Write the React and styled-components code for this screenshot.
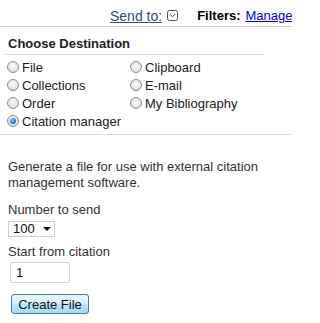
import React from "react";
import styled, { createGlobalStyle } from "styled-components";

const Global = createGlobalStyle`
  html, body { margin: 0; padding: 0; background: #fff; }
  body { font-family: "Liberation Sans", Arial, sans-serif; font-size: 13px; color: #333; }
`;

const Page = styled.div`
  width: 292px;
  height: 323px;
  overflow: hidden;
`;

const TopBar = styled.div`
  display: flex;
  align-items: center;
  height: 27px;
  padding: 5px 0 0 110px;
  border-bottom: 1px solid #ccc;
  white-space: nowrap;
  box-sizing: border-box;
`;

const SendLink = styled.a`
  color: #2f4a8b;
  text-decoration: underline;
  font-size: 14px;
`;

const IconBox = styled.span`
  display: inline-flex;
  width: 11px;
  height: 11px;
  margin-left: 5px;
  margin-right: 19px;
`;

const FilterLabel = styled.span`
  font-weight: bold;
  color: #000;
`;

const ManageLink = styled.a`
  color: #0000ee;
  text-decoration: underline;
  margin-left: 5px;
`;

const Section = styled.div`
  padding: 8px 0 0 5px;
`;

const Heading = styled.div`
  font-weight: bold;
  color: #222;
  font-size: 13px;
  line-height: 17px;
  padding: 0 0 2px 3px;
  margin-right: 27px;
  border-bottom: 1px solid #ddd;
`;

const RadioGrid = styled.div`
  display: grid;
  grid-template-columns: 123px 1fr;
  grid-auto-rows: 18px;
  margin: 3px 0 0 2px;
`;

const RadioItem = styled.label`
  display: flex;
  align-items: center;
  gap: 3px;
  font-size: 13px;
  color: #222;
`;

const RadioDot = styled.span`
  width: 12px;
  height: 12px;
  border-radius: 50%;
  box-sizing: border-box;
  border: 1px solid #8e8f8f;
  background: radial-gradient(circle at 50% 40%, #fdfdfd 0%, #e6e6e6 55%, #cfcfcf 100%);
  display: inline-flex;
  align-items: center;
  justify-content: center;
  &::after {
    content: "";
    display: ${(p) => (p.$checked ? "block" : "none")};
    width: 6px;
    height: 6px;
    border-radius: 50%;
    background: radial-gradient(circle at 40% 35%, #7fd3ff 0%, #1b8fd4 50%, #0b4f7c 100%);
  }
`;

const Divider = styled.div`
  border-top: 1px solid #ddd;
  margin-top: 4px;
`;

const Body = styled.div`
  padding: 24px 0 0 8px;
  line-height: 16px;
`;

const Paragraph = styled.p`
  margin: 0 0 11px 0;
  color: #333;
`;

const FieldLabel = styled.div`
  color: #333;
`;

const SelectBox = styled.div`
  display: flex;
  align-items: center;
  width: 47px;
  height: 16px;
  box-sizing: border-box;
  border: 1px solid #cfcfcf;
  padding-left: 4px;
  margin: 3px 0 7px 0;
  color: #111;
  line-height: 14px;
`;

const Caret = styled.span`
  margin-left: 8px;
  width: 0;
  height: 0;
  border-left: 4px solid transparent;
  border-right: 4px solid transparent;
  border-top: 4px solid #111;
`;

const TextInput = styled.div`
  width: 60px;
  height: 21px;
  box-sizing: border-box;
  border: 1px solid #d2d2d2;
  border-radius: 2px;
  margin: 2px 0 0 2px;
  padding: 0 0 0 5px;
  line-height: 19px;
  color: #111;
`;

const Button = styled.button`
  display: block;
  margin: 11px 0 0 3px;
  width: 78px;
  height: 20px;
  box-sizing: border-box;
  border: 1px solid #3c7fb1;
  border-radius: 3px;
  background: linear-gradient(#eaf6fd 0%, #d9f0fc 45%, #bee6fd 50%, #a7d9f5 100%);
  font-family: "Liberation Sans", Arial, sans-serif;
  font-size: 13px;
  color: #111;
  padding: 0;
  line-height: 17px;
`;

const ChevronIcon = () => (
  <svg width="11" height="11" viewBox="0 0 11 11">
    <rect x="0.5" y="0.5" width="10" height="10" rx="2" fill="#fff" stroke="#555" />
    <path d="M3 4.2 L5.5 6.8 L8 4.2" fill="none" stroke="#444" strokeWidth="1" />
  </svg>
);

const options = [
  ["File", false],
  ["Clipboard", false],
  ["Collections", false],
  ["E-mail", false],
  ["Order", false],
  ["My Bibliography", false],
  ["Citation manager", true],
];

export default function App() {
  return (
    <Page>
      <Global />
      <TopBar>
        <SendLink href="#">Send to:</SendLink>
        <IconBox>
          <ChevronIcon />
        </IconBox>
        <FilterLabel>Filters:</FilterLabel>
        <ManageLink href="#">Manage</ManageLink>
      </TopBar>
      <Section>
        <Heading>Choose Destination</Heading>
        <RadioGrid>
          {options.map(([label, checked]) => (
            <RadioItem key={label}>
              <RadioDot $checked={checked} />
              {label}
            </RadioItem>
          ))}
        </RadioGrid>
      </Section>
      <Divider />
      <Body>
        <Paragraph>
          Generate a file for use with external citation management software.
        </Paragraph>
        <FieldLabel>Number to send</FieldLabel>
        <SelectBox>
          100
          <Caret />
        </SelectBox>
        <FieldLabel>Start from citation</FieldLabel>
        <TextInput>1</TextInput>
        <Button>Create File</Button>
      </Body>
    </Page>
  );
}
